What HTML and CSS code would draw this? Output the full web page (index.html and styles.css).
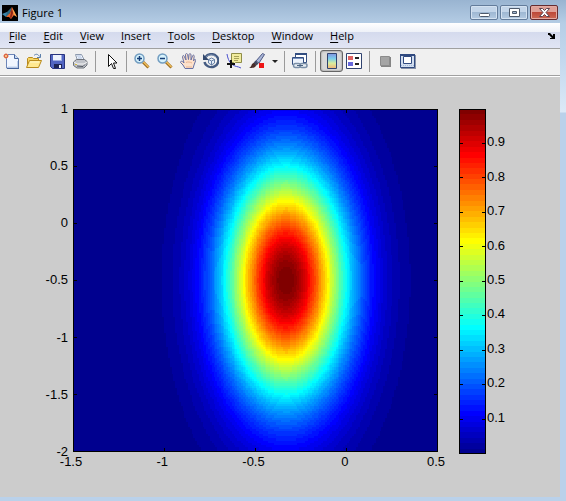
FILE: index.html
```html
<!DOCTYPE html>
<html lang="en">
<head>
<meta charset="utf-8">
<title>Figure 1</title>
<link rel="stylesheet" href="styles.css">
</head>
<body>
<div class="window">
  <header class="titlebar">
    <svg class="logo" viewBox="0 0 16 16" aria-hidden="true">
      <rect width="16" height="16" fill="#000"/>
      <path d="M0 9l5-2 2 2-3 3z" fill="#3c86ad"/><path d="M5 7l3-3 2-2-2 6-2 3-2 0z" fill="#2e6c86"/>
      <path d="M4 12l4-4 2-6 2 4 3 6-3-2-3 4-2-2z" fill="#e8642a"/><path d="M10 2l1 6-2 6-1-2z" fill="#8f2415"/><path d="M10 3l2 3 3 6-3-2z" fill="#f6a449"/>
    </svg>
    <h1 class="title">Figure 1</h1>
    <div class="controls">
      <button class="control" aria-label="Minimize"><svg viewBox="0 0 26 13"><rect x="8.500" y="7.500" width="10" height="3" rx="1" fill="#fff" stroke="#4d596b"/></svg></button>
      <button class="control" aria-label="Maximize"><svg viewBox="0 0 26 13"><path fill-rule="evenodd" d="M8.500 2.500h10v8h-10zM11.500 5.500h4v2h-4z" fill="#fff" stroke="#4d596b"/></svg></button>
      <button class="control close" aria-label="Close"><svg viewBox="0 0 26 13"><path d="M8.500 2.500h3l2 2 2-2h3l-3.500 4 3.500 4h-3l-2-2-2 2h-3l3.500-4z" fill="#fff" stroke="#5d4450"/></svg></button>
    </div>
  </header>

  <nav class="menubar" aria-label="Menu">
    <button class="menu"><u>F</u>ile</button>
    <button class="menu"><u>E</u>dit</button>
    <button class="menu"><u>V</u>iew</button>
    <button class="menu"><u>I</u>nsert</button>
    <button class="menu"><u>T</u>ools</button>
    <button class="menu"><u>D</u>esktop</button>
    <button class="menu"><u>W</u>indow</button>
    <button class="menu"><u>H</u>elp</button>
    <button class="dock" aria-label="Dock figure"><svg viewBox="0 0 8 6"><path d="M0 0h2l3 3V1h2v5H2V5h2L1 2H0z"/></svg></button>
  </nav>

  <div class="toolbar" role="toolbar" aria-label="Figure tools">
    <button class="tool" aria-label="New figure"><svg viewBox="0 0 16 16">
      <path d="M3.500 1.500h8l4 4v9.500h-12z" fill="#f1f6ff" stroke="#6d86b8"/><path d="M11.500 1.500v4h4" fill="#c8d9f2" stroke="#46659d"/><path d="M4 15.500h12V6" fill="none" stroke="#46659d"/><path d="M5 14h9.500V8" fill="none" stroke="#bfd2ee"/>
      <path d="M3 0v6M0 3h6M1 1l4 4M5 1L1 5" stroke="#ee8b6a"/><circle cx="3" cy="3" r="1.500" fill="#fff1a0" stroke="#d65034"/></svg></button>
    <button class="tool" aria-label="Open file"><svg viewBox="0 0 16 16">
      <path d="M1.500 14V5.500l1-1h4l1 1h5V8" fill="#f7d562" stroke="#b88a1d"/><path d="M.5 14.500l3-7h12l-3 7z" fill="#ffe991" stroke="#b88a1d"/><path d="M4 9h9" stroke="#fff8cf"/>
      <path d="M8 2.500c2-2 4-1.500 5.500 1M14.500 1v3.500H11" fill="none" stroke="#5c80ab"/></svg></button>
    <button class="tool" aria-label="Save figure"><svg viewBox="0 0 16 16">
      <path d="M1.500 1.500h14v14h-12l-2-2z" fill="#5265c2" stroke="#29347f"/><path d="M4 2h8v6H4z" fill="#edf2fd"/><path d="M12 2h1v6H4V7h8z" fill="#9faee2"/><path d="M5 11h8v4H5z" fill="#1e2555"/><path d="M10 12h2v3h-2z" fill="#eef1ff"/></svg></button>
    <button class="tool" aria-label="Print figure"><svg viewBox="0 0 16 16">
      <path d="M5.500 7.500l-2-6h6l3 6z" fill="#f4f8ff" stroke="#8c99ad"/><path d="M5 3h4M6 5h4" stroke="#a9bddd"/>
      <path d="M1.500 9l3-2.500h8l2.500 2v3.500l-3 3h-7l-3.500-2.500z" fill="#c0c3c9" stroke="#6d727a"/><path d="M2 9l3 2h7l3-2" fill="none" stroke="#f6f6f6"/><path d="M5 13l6 .5 2-2" fill="none" stroke="#50555e"/><path d="M3 11.500h2" stroke="#d3b942"/></svg></button>
    <span class="sep"></span>
    <button class="tool" aria-label="Edit plot"><svg viewBox="0 0 16 16"><path d="M5.500 1.500v12l3-3 2 5h2l-2-5.500h3.500z" fill="#fff" stroke="#111"/></svg></button>
    <span class="sep"></span>
    <button class="tool" aria-label="Zoom in"><svg viewBox="0 0 16 16">
      <path d="M9 9l5.500 5.500" stroke="#98691b" stroke-width="3"/><path d="M9 8.500l5.500 5.500" stroke="#efbd5d" stroke-width="1.500"/><circle cx="5.500" cy="5.500" r="4.500" fill="#d7f2fc" stroke="#719cc0" stroke-width="1.500"/><path d="M3 5.500h5M5.500 3v5" stroke="#163e78" stroke-width="1.500"/></svg></button>
    <button class="tool" aria-label="Zoom out"><svg viewBox="0 0 16 16">
      <path d="M9 9l5.500 5.500" stroke="#98691b" stroke-width="3"/><path d="M9 8.500l5.500 5.500" stroke="#efbd5d" stroke-width="1.500"/><circle cx="5.500" cy="5.500" r="4.500" fill="#d7f2fc" stroke="#719cc0" stroke-width="1.500"/><path d="M3 5.500h5" stroke="#163e78" stroke-width="1.500"/></svg></button>
    <button class="tool" aria-label="Pan"><svg viewBox="0 0 16 16">
      <path d="M5 15.500L3 12 .5 9.500c0-2 2-1.500 3.500.5L2.500 4c0-2 1.500-2 2 0L6 7 5.500 2c0-2 2-2 2.200 0L8.500 6.500 9 1.500c.5-1.500 2-1 2 .5v5l1.500-4c.5-1.500 2-1 1.700.5L13.500 8l1-1.500c1-.5 1.500.5 1 1.500L14 12l-1 3.500z" fill="#fde1cb" stroke="#6871a3"/><path d="M6 9.500c2-1 4-.5 6 .5M6 14h6" fill="none" stroke="#e9b594"/></svg></button>
    <button class="tool" aria-label="Rotate 3D"><svg viewBox="0 0 16 16">
      <path d="M2.500 4a7 6.500 0 1 1-1 5" fill="none" stroke="#445b82" stroke-width="2.400"/><path d="M3 4a6.500 6 0 0 1 10 0" fill="none" stroke="#8297b6"/><path d="M0 1v6h6z" fill="#344a6f"/><path d="M5.500 6.500l3-1.500 3 1.500v3.500l-3 2-3-2zM5.500 6.500l3 1.500 3-1.500M8.500 8v4" fill="#e7f0fb" stroke="#6680a6"/></svg></button>
    <button class="tool" aria-label="Data cursor"><svg viewBox="0 0 16 16">
      <path d="M1 1c1 6 3 9 6 11s4 1 8 3" fill="none" stroke="#4a50cf"/><path d="M5.500.5h10v9h-6l-2 2v-2h-2z" fill="#f1ec9e" stroke="#8f8d48"/><path d="M8 3.500h5M8 5.500h5M8 7.500h4" stroke="#a7a25a"/><path d="M1 11h8M5 7v8" stroke="#111" stroke-width="2"/></svg></button>
    <button class="tool" aria-label="Brush data"><svg viewBox="0 0 16 16">
      <path d="M7 8l6.500-7.500 2 1L10 10z" fill="#a9b6d6" stroke="#4c5682"/><path d="M6.500 7.500l3 3-2 2-3.500-2z" fill="#44495f"/><path d="M0 15c3-1 2-5 5-5l2 2c0 3-4 3-7 3z" fill="#492d2a"/><path d="M10 10h5v5h-5z" fill="#ee1515"/></svg></button>
    <button class="tool drop" aria-label="Brush options"><svg viewBox="0 0 6 3"><path d="M0 0h6L3 3z" fill="#222"/></svg></button>
    <span class="sep"></span>
    <button class="tool" aria-label="Link plot"><svg viewBox="0 0 16 16">
      <path d="M3.500.5h11v9h-11z" fill="#fff" stroke="#324d80"/><path d="M3 1h12" stroke="#324d80" stroke-width="2"/><path d="M.5 4.500h11v7H.5z" fill="#edf3fc" stroke="#324d80"/><path d="M1 5.500h10" stroke="#7891bd"/>
      <rect x="1.500" y="10.500" width="7" height="4" rx="2" fill="#e7edf3" stroke="#7b90a8" stroke-width="1.500"/><rect x="8" y="10.500" width="7" height="4" rx="2" fill="#e7edf3" stroke="#7b90a8" stroke-width="1.500"/><path d="M5 12.500h6" stroke="#4a6280"/></svg></button>
    <span class="sep"></span>
    <button class="tool pressed" aria-label="Insert colorbar" aria-pressed="true"><svg viewBox="0 0 16 16">
      <defs><linearGradient id="bar" x2="0" y2="1"><stop stop-color="#8193e0"/><stop offset=".35" stop-color="#79cfec"/><stop offset=".65" stop-color="#dced9c"/><stop offset="1" stop-color="#f1b379"/></linearGradient></defs>
      <path d="M3.500.5h9v15h-9z" fill="url(#bar)" stroke="#30436f"/></svg></button>
    <button class="tool" aria-label="Insert legend"><svg viewBox="0 0 16 16">
      <path d="M.5.500h15v15H.5z" fill="#fff" stroke="#30436f"/><path d="M2 3h5v4H2z" fill="#df6363"/><path d="M2 9h5v4H2z" fill="#6667dc"/><path d="M9 5h4M9 11h4" stroke="#222" stroke-width="2"/></svg></button>
    <span class="sep"></span>
    <button class="tool" aria-label="Hide plot tools" disabled><svg viewBox="0 0 16 16"><path d="M4 4h10v10H4z" fill="#858585"/><path d="M3.500 3.500h9v9h-9z" fill="#a5a5a5" stroke="#8c8c8c"/></svg></button>
    <button class="tool" aria-label="Show plot tools"><svg viewBox="0 0 16 16"><path d="M1 2h15v14H1z" fill="#8993a9"/><path d="M.5 1.500h14v13H.5z" fill="#d2deef" stroke="#304a80"/><path d="M0 2h15" stroke="#304a80" stroke-width="2"/><path d="M3.500 3.500h8v7h-8z" fill="#fff" stroke="#304a80"/><path d="M1 12.500h13" stroke="#a4b9da" stroke-dasharray="1 1"/></svg></button>
  </div>

  <main class="figure">
    <div class="y-labels"><span>1</span><span>0.5</span><span>0</span><span>-0.5</span><span>-1</span><span>-1.5</span><span>-2</span></div>
    <div class="plot"><canvas id="surface" role="img" aria-label="Color map of a two-dimensional Gaussian"></canvas></div>
    <div class="x-labels"><span>-1.5</span><span>-1</span><span>-0.5</span><span>0</span><span>0.5</span></div>
    <div class="colorbar"><canvas id="scale" role="img" aria-label="Color scale"></canvas></div>
    <div class="scale-labels"><span>0.9</span><span>0.8</span><span>0.7</span><span>0.6</span><span>0.5</span><span>0.4</span><span>0.3</span><span>0.2</span><span>0.1</span></div>
  </main>
</div>
<script src="plot.js"></script>
</body>
</html>
```
FILE: styles.css
```css
* { box-sizing: border-box; }
body { margin: 0; font-family: "Open Sans", "Noto Sans", sans-serif; font-size: 11px; color: #000; }
button { margin: 0; padding: 0; border: 0; background: none; font: inherit; color: inherit; }
svg, canvas { display: block; }

.window {
  display: flex;
  flex-direction: column;
  min-height: 100vh;
  padding: 0 6px 4px 0;
  background: linear-gradient(#99b4d1 0, #b6cee6 23px, #c3d8ee 60px, #dce9f7 112px, #bad1ea 113px);
}

.titlebar { display: flex; align-items: center; height: 23px; padding: 2px 2px 0; background: linear-gradient(#99b4d1, #b4cce4); }
.logo { width: 16px; height: 16px; }
.title { flex: 1; margin: 0 4px; font-size: 11px; font-weight: 400; }
.controls { display: flex; gap: 2px; }
.control {
  width: 28px;
  height: 15px;
  border: 1px solid #637c9b;
  border-radius: 2px;
  background: linear-gradient(#c3d5e9 45%, #9fb8d3 50%, #b5cbe2);
  box-shadow: inset 0 0 0 1px #d4e2f1;
}
.control svg { width: 26px; height: 13px; }
.close { border-color: #652c30; background: linear-gradient(#dfa097 45%, #bd4939 50%, #cc6a55); box-shadow: inset 0 0 0 1px #e3aaa2; }

.menubar {
  display: flex;
  align-items: center;
  gap: 17px;
  height: 26px;
  padding: 0 4px 0 9px;
  border-bottom: 1px solid #a0a0a0;
  background: linear-gradient(#fff 0, #eef1f8 9px, #d4daed 9px, #e1e5f4 100%);
}
.menu { line-height: 16px; }
.menu u { text-underline-offset: 2px; }
.dock { margin-left: auto; }
.dock svg { width: 8px; height: 6px; }

.toolbar {
  display: flex;
  align-items: center;
  height: 28px;
  padding-bottom: 3px;
  border-bottom: 1px solid #fff;
  background: #f0f0f0;
  box-shadow: inset 0 -1px #a0a0a0;
}
.tool { display: grid; align-items: center; justify-content: start; width: 23px; height: 22px; padding-left: 3px; }
.tool svg { width: 16px; height: 16px; }
.drop { width: 12px; }
.drop svg { width: 6px; height: 3px; }
.pressed { border: 1px solid #666; border-radius: 3px; background: #d8d8d8; box-shadow: inset 0 0 2px #777; }
.sep { width: 1px; height: 21px; margin: 0 4px 0 3px; background: #9a9a9a; }

.figure {
  flex: 1;
  display: grid;
  grid-template-columns: 73px 1fr 48px 74px;
  grid-template-rows: 1fr 45px;
  padding-top: 32px;
  background: #ccc;
  font: 13px/14px "Liberation Sans", Arial, sans-serif;
}
.plot, .colorbar { position: relative; }
.plot canvas, .colorbar canvas { position: absolute; inset: 0; width: 100%; height: 100%; }
.y-labels { display: flex; flex-direction: column; justify-content: space-between; align-items: flex-end; margin: -7px 0; padding-right: 5px; }
.x-labels { grid-column: 2; grid-row: 2; display: flex; justify-content: space-between; margin: 0 2px 0 -2px; padding-top: 3px; }
.x-labels span { display: flex; justify-content: center; width: 0; white-space: nowrap; }
.colorbar { grid-column: 3; grid-row: 1 / 3; margin: 0 0 43px 21px; }
.scale-labels { grid-column: 4; grid-row: 1 / 3; display: grid; grid-template-rows: repeat(10, 1fr); margin-bottom: 44px; padding-left: 1px; }
.scale-labels span { align-self: end; margin-bottom: -6px; }
```
FILE: plot.js
```js
const LEVELS = 64;
const X_RANGE = [-1.5, 0.5];
const Y_RANGE = [-2, 1];

// Jet color map, one entry per level.
function jet(level) {
  const channel = (center) => {
    const v = 1.5 - Math.abs((level + 1) / 16 - center);
    return Math.round(255 * Math.max(0, Math.min(1, v)));
  };
  return `rgb(${channel(3)},${channel(2)},${channel(1)})`;
}

function prepare(canvas) {
  canvas.width = canvas.clientWidth;
  canvas.height = canvas.clientHeight;
  return canvas.getContext('2d');
}

function frame(ctx, w, h) {
  ctx.strokeStyle = '#000';
  ctx.strokeRect(0.5, 0.5, w - 1, h - 1);
  ctx.fillStyle = '#000';
}

function drawSurface() {
  const canvas = document.getElementById('surface');
  const ctx = prepare(canvas);
  const { width: w, height: h } = canvas;
  const cols = 200;
  const rows = 150;
  for (let r = 0; r < rows; r++) {
    const y = Y_RANGE[1] - (r + 0.5) / rows * (Y_RANGE[1] - Y_RANGE[0]);
    const y0 = Math.round(r * h / rows);
    const y1 = Math.round((r + 1) * h / rows);
    for (let c = 0; c < cols; c++) {
      const x = X_RANGE[0] + (c + 0.5) / cols * (X_RANGE[1] - X_RANGE[0]);
      const z = Math.exp(-((3 * x + 1) ** 2) - (y + 0.5) ** 2);
      const x0 = Math.round(c * w / cols);
      const x1 = Math.round((c + 1) * w / cols);
      ctx.fillStyle = jet(Math.min(LEVELS - 1, Math.floor(z * LEVELS)));
      ctx.fillRect(x0, y0, x1 - x0, y1 - y0);
    }
  }
  frame(ctx, w, h);
  for (let i = 1; i < 4; i++) {
    const x = Math.round(i * (w - 1) / 4);
    ctx.fillRect(x, 0, 1, 4);
    ctx.fillRect(x, h - 4, 1, 4);
  }
  for (let i = 1; i < 6; i++) {
    const y = Math.round(i * (h - 1) / 6);
    ctx.fillRect(0, y, 4, 1);
    ctx.fillRect(w - 4, y, 4, 1);
  }
}

function drawScale() {
  const canvas = document.getElementById('scale');
  const ctx = prepare(canvas);
  const { width: w, height: h } = canvas;
  for (let i = 0; i < LEVELS; i++) {
    const top = Math.round(h - (i + 1) * h / LEVELS);
    const bottom = Math.round(h - i * h / LEVELS);
    ctx.fillStyle = jet(i);
    ctx.fillRect(0, top, w, bottom - top);
  }
  frame(ctx, w, h);
  for (let i = 1; i < 10; i++) {
    const y = Math.round(i * h / 10) - 1;
    ctx.fillRect(0, y, 4, 1);
    ctx.fillRect(w - 4, y, 4, 1);
  }
}

function draw() {
  drawSurface();
  drawScale();
}

window.addEventListener('resize', draw);
draw();
```
